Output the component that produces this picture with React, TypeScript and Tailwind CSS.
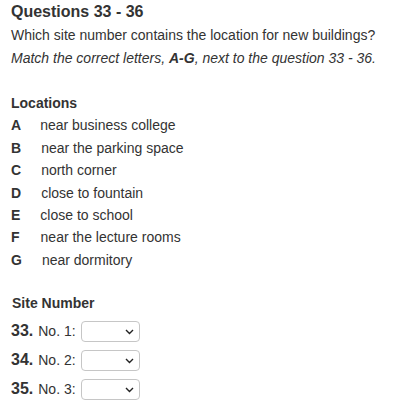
const locations = [
  { letter: 'A', text: 'near business college', gap: 'ml-[19px]' },
  { letter: 'B', text: 'near the parking space', gap: 'ml-[20px]' },
  { letter: 'C', text: 'north corner', gap: 'ml-[20px]' },
  { letter: 'D', text: 'close to fountain', gap: 'ml-[20px]' },
  { letter: 'E', text: 'close to school', gap: 'ml-[20px]' },
  { letter: 'F', text: 'near the lecture rooms', gap: 'ml-[21px]' },
  { letter: 'G', text: 'near dormitory', gap: 'ml-[20px]' },
];

const questions = [
  { num: 33, label: 'No. 1:' },
  { num: 34, label: 'No. 2:' },
  { num: 35, label: 'No. 3:' },
];

function FakeSelect() {
  return (
    <div className="relative ml-[5px] h-[21px] w-[59px] rounded-[4px] border border-[#c6c6c6] bg-white">
      <svg
        className="absolute right-[5px] top-[7px]"
        width="9"
        height="6"
        viewBox="0 0 9 6"
        fill="none"
      >
        <path d="M1 1l3.5 3.5L8 1" stroke="#222" strokeWidth="1.4" />
      </svg>
    </div>
  );
}

export default function App() {
  return (
    <div className="min-h-[400px] bg-white pl-[11px] text-[#333] font-['Liberation_Sans',Arial,sans-serif]">
      <h2 className="text-[16px] font-bold leading-[24px]">Questions 33 - 36</h2>
      <p className="text-[14px] leading-[23px]">Which site number contains the location for new buildings?</p>
      <p className="text-[14px] leading-[23px] italic">
        Match the correct letters, <b>A-G</b>, next to the question 33 - 36.
      </p>

      <h3 className="mt-[22px] text-[14px] font-bold leading-[22.4px]">Locations</h3>
      <ul className="text-[14px] leading-[22.4px]">
        {locations.map((loc) => (
          <li key={loc.letter} className="flex">
            <b>{loc.letter}</b>
            <span className={loc.gap}>{loc.text}</span>
          </li>
        ))}
      </ul>

      <h3 className="mt-[21px] pl-px text-[14px] font-bold leading-[22.4px]">Site Number</h3>
      <div className="mt-[2px]">
        {questions.map((q) => (
          <div key={q.num} className="flex h-[29px] items-center">
            <span className="flex items-baseline">
              <b className="text-[16px] leading-[20px]">{q.num}.</b>
              <span className="ml-[5px] text-[14px] leading-[20px]">{q.label}</span>
            </span>
            <FakeSelect />
          </div>
        ))}
      </div>
    </div>
  );
}
